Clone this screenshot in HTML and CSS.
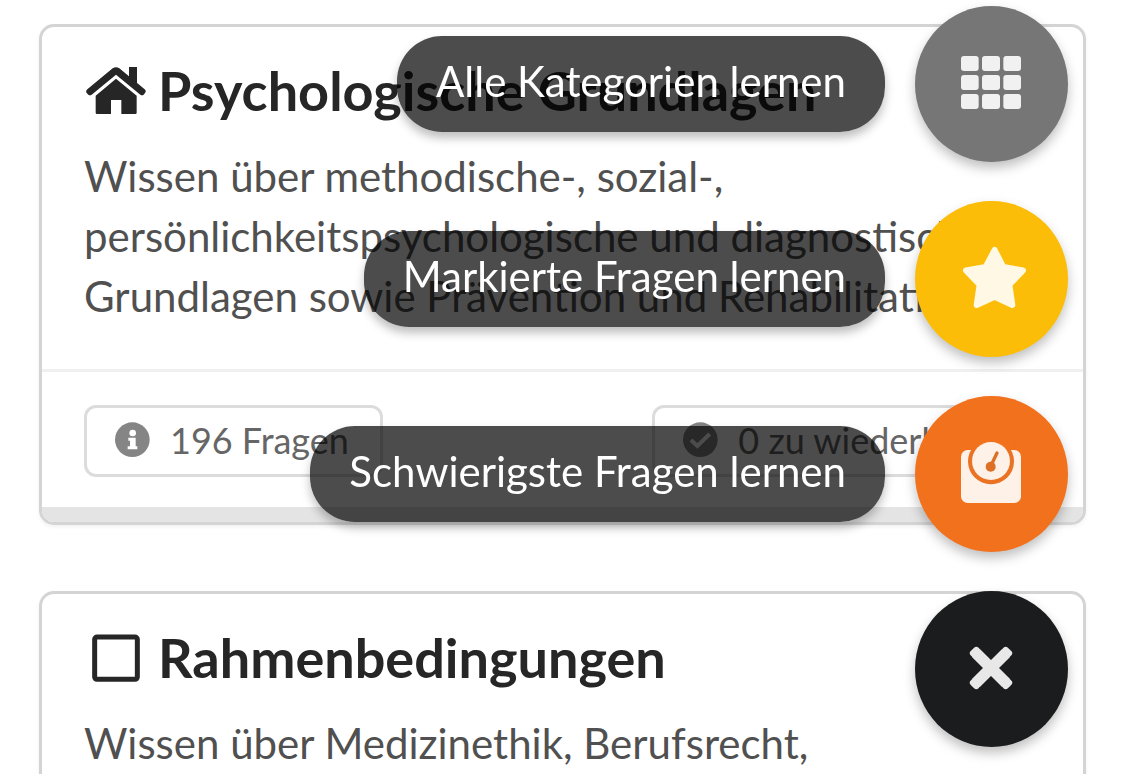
FILE: index.html
```html
<!DOCTYPE html>
<html lang="de">
<head>
<meta charset="utf-8">
<meta name="viewport" content="width=device-width, initial-scale=1">
<title>Kategorien</title>
<link rel="stylesheet" href="styles.css">
</head>
<body>
<main class="cards">
  <article class="card card-barred">
    <div class="card-content">
      <h2 class="card-title">
        <svg class="title-icon" viewBox="162 165 186 156" aria-hidden="true">
          <path d="M297 171h24v56l-24-20z"/>
          <path d="M172 238 248 175Q258 168 268 175L344 238Q350 243 345 249L341 254Q336 258 331 254L258 194 185 254Q180 258 175 254L170 249Q166 243 172 238z"/>
          <path d="M258 206 320 257V308q0 4-4 4H274V270H243V312H201q-4 0-4-4V257z"/>
        </svg>
        <span>Psychologische Grundlagen</span>
      </h2>
      <p class="card-text">Wissen über methodische-, sozial-, persönlichkeitspsychologische und diagnostische Grundlagen sowie Prävention und Rehabilitation.</p>
    </div>
    <div class="card-extra">
      <button class="stat" type="button">
        <svg class="stat-icon" viewBox="0 0 105 105" aria-hidden="true">
          <circle cx="52" cy="53" r="52"/>
          <g fill="#fff"><circle cx="53" cy="33" r="10"/><path d="M40 47h22v26h5v9H38v-9h7V56h-5z"/></g>
        </svg>
        <span>196 Fragen</span>
      </button>
      <button class="stat" type="button">
        <svg class="stat-icon" viewBox="0 0 105 105" aria-hidden="true">
          <circle cx="52" cy="53" r="52"/>
          <path d="M24 54 43 72 80 36" fill="none" stroke="#fff" stroke-width="12"/>
        </svg>
        <span>0 zu wiederh.</span>
      </button>
    </div>
  </article>
  <article class="card">
    <div class="card-content">
      <h2 class="card-title">
        <svg class="title-icon" viewBox="162 154 186 156" aria-hidden="true">
          <rect x="194" y="169" width="128" height="127" rx="7" fill="none" stroke="currentColor" stroke-width="15"/>
        </svg>
        <span>Rahmenbedingungen</span>
      </h2>
      <p class="card-text">Wissen über Medizinethik, Berufsrecht,</p>
    </div>
  </article>
</main>

<nav class="fab-menu" aria-label="Lernen">
  <div class="fab-row">
    <label class="fab-label" for="fab-all">Alle Kategorien lernen</label>
    <button class="fab fab-grey" id="fab-all" type="button">
      <svg viewBox="45 18 459 468" aria-hidden="true" fill="#f1f1f1">
        <rect x="183" y="168" width="53" height="45" rx="9"/><rect x="246" y="168" width="54" height="45" rx="9"/><rect x="310" y="168" width="53" height="45" rx="9"/>
        <rect x="183" y="225" width="53" height="45" rx="9"/><rect x="246" y="225" width="54" height="45" rx="9"/><rect x="310" y="225" width="53" height="45" rx="9"/>
        <rect x="183" y="282" width="53" height="45" rx="9"/><rect x="246" y="282" width="54" height="45" rx="9"/><rect x="310" y="282" width="53" height="45" rx="9"/>
      </svg>
    </button>
  </div>
  <div class="fab-row">
    <label class="fab-label" for="fab-marked">Markierte Fragen lernen</label>
    <button class="fab fab-yellow" id="fab-marked" type="button">
      <svg viewBox="45 33 459 468" aria-hidden="true">
        <path d="M284 180 310 231 369 241 328 284 337 345 284 320 230 345 239 284 198 241 257 231z" fill="#fff8e5" stroke="#fff8e5" stroke-width="18" stroke-linejoin="round"/>
      </svg>
    </button>
  </div>
  <div class="fab-row">
    <label class="fab-label" for="fab-hard">Schwierigste Fragen lernen</label>
    <button class="fab fab-orange" id="fab-hard" type="button">
      <svg viewBox="45 48 459 468" aria-hidden="true">
        <rect x="183" y="210" width="180" height="159" rx="20" fill="#fef1e8"/>
        <circle cx="273" cy="244" r="69" fill="#ea7222"/>
        <path d="M200 176H346V209H200z" fill="#f2711c"/>
        <circle cx="273" cy="243" r="57" fill="#fef1e8"/>
        <circle cx="272" cy="260" r="15" fill="#dd7025"/>
        <path d="M272 259 291 219" stroke="#dd7025" stroke-width="10" stroke-linecap="round"/>
      </svg>
    </button>
  </div>
  <div class="fab-row">
    <button class="fab fab-black" type="button" aria-label="Schließen">
      <svg viewBox="45 33 459 468" aria-hidden="true">
        <path d="M227 218 319 310M319 218 227 310" stroke="#e8e8e8" stroke-width="34"/>
        <path d="M229 210 219 220M317 210 327 220M219 308 229 318M327 308 317 318" stroke="#e8e8e8" stroke-width="19" stroke-linecap="round"/>
      </svg>
    </button>
  </div>
</nav>
</body>
</html>
```
FILE: styles.css
```css
* {
  box-sizing: border-box;
}

html {
  scrollbar-width: none;
}

body {
  margin: 0;
  background: #fff;
  font-family: Lato, "Open Sans", sans-serif;
  font-size: 42px;
}

.cards {
  display: flex;
  flex-direction: column;
  gap: 66px;
  padding: 24px 39px 0;
}

.card {
  overflow: hidden;
  border: 3px solid #d4d4d5;
  border-radius: 15px;
  background: #fff;
  box-shadow: 0 2px 4px rgba(0, 0, 0, 0.06);
}

.card-barred::after {
  content: "";
  display: block;
  height: 15px;
  background: #e4e4e4;
}

.card-content {
  padding: 29px 42px 42px;
}

.card-title {
  display: flex;
  align-items: center;
  gap: 12px;
  margin: 0 0 21px;
  color: #262626;
  font-size: 54px;
  font-weight: 700;
  line-height: 69px;
  white-space: nowrap;
}

.title-icon {
  flex: none;
  width: 62px;
  height: 52px;
  fill: currentColor;
}

.card-text {
  margin: 0 0 1px;
  color: #505050;
  line-height: 60px;
}

.card-extra {
  display: flex;
  justify-content: space-between;
  padding: 33px 99px 30px 42px;
  border-top: 3px solid #f0f0f0;
}

.stat {
  display: flex;
  align-items: center;
  gap: 20px;
  height: 72px;
  padding: 0 31px 3px 28px;
  border: 3px solid #dcdcdc;
  border-radius: 12px;
  background: #fff;
  color: #666;
  font: inherit;
  font-size: 36px;
  white-space: nowrap;
}

.stat-icon {
  flex: none;
  width: 35px;
  height: 35px;
  fill: #858585;
}

.fab-menu {
  position: fixed;
  right: 57px;
  bottom: 27px;
  display: flex;
  flex-direction: column;
  gap: 39px;
}

.fab-row {
  display: flex;
  align-items: center;
  justify-content: flex-end;
  gap: 30px;
}

.fab-label {
  padding: 15px 39px 21px;
  border-radius: 45px;
  background: rgba(0, 0, 0, 0.7);
  box-shadow: 0 6px 10px rgba(0, 0, 0, 0.25);
  color: #fff;
  line-height: 60px;
  white-space: nowrap;
}

.fab {
  width: 153px;
  height: 156px;
  padding: 0;
  border: 0;
  border-radius: 50%;
  box-shadow: 0 6px 12px rgba(0, 0, 0, 0.25);
}

.fab svg {
  display: block;
  width: 100%;
  height: 100%;
}

.fab-grey {
  background: #767676;
}

.fab-yellow {
  background: #fbbd08;
}

.fab-orange {
  background: #f2711c;
}

.fab-black {
  background: #1b1c1d;
}
```
